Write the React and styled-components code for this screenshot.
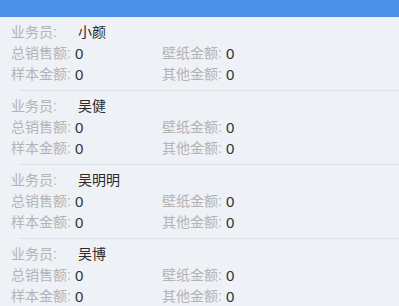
import React from "react";
import styled, { createGlobalStyle } from "styled-components";

const people = [
  { name: "小颜", total: 0, wallpaper: 0, sample: 0, other: 0 },
  { name: "吴健", total: 0, wallpaper: 0, sample: 0, other: 0 },
  { name: "吴明明", total: 0, wallpaper: 0, sample: 0, other: 0 },
  { name: "吴博", total: 0, wallpaper: 0, sample: 0, other: 0 },
];

const App = () => {
  return (
    <Page>
      <GlobalStyle />
      <Header />
      {people.map((p, i) => (
        <React.Fragment key={p.name}>
          {i > 0 && <Divider />}
          <Block>
            <NameRow>
              <NameLabel>业务员:</NameLabel>
              <Name>{p.name}</Name>
            </NameRow>
            <Grid>
              <Cell>
                <Label>总销售额:</Label>
                <Value>{p.total}</Value>
              </Cell>
              <Cell>
                <Label>壁纸金额:</Label>
                <Value>{p.wallpaper}</Value>
              </Cell>
              <Cell>
                <Label>样本金额:</Label>
                <Value>{p.sample}</Value>
              </Cell>
              <Cell>
                <Label>其他金额:</Label>
                <Value>{p.other}</Value>
              </Cell>
            </Grid>
          </Block>
        </React.Fragment>
      ))}
    </Page>
  );
};

export default App;

const GlobalStyle = createGlobalStyle`
  html, body {
    margin: 0;
    padding: 0;
    background: #eef1f6;
  }
  body {
    font-family: "Liberation Sans", "Noto Sans CJK SC", sans-serif;
    font-size: 14px;
  }
`;

const Page = styled.div`
  width: 399px;
  height: 306px;
  overflow: hidden;
  background: #eef1f6;
`;

const Header = styled.div`
  height: 17px;
  background: #4c8fe8;
`;

const Divider = styled.div`
  height: 1px;
  margin-left: 20px;
  background: #dde0e6;
`;

const Block = styled.div`
  padding: 5px 0 5px 11px;
`;

const NameRow = styled.div`
  display: flex;
  height: 21px;
  line-height: 21px;
`;

const NameLabel = styled.span`
  width: 67px;
  color: #b4b4b4;
`;

const Name = styled.span`
  color: #2a2a2a;
`;

const Grid = styled.div`
  display: grid;
  grid-template-columns: 151px 1fr;
  grid-auto-rows: 21px;
  line-height: 21px;
`;

const Cell = styled.div`
  display: flex;
`;

const Label = styled.span`
  color: #b4b4b4;
  margin-right: 4px;
`;

const Value = styled.span`
  color: #333;
  font-size: 15px;
`;
